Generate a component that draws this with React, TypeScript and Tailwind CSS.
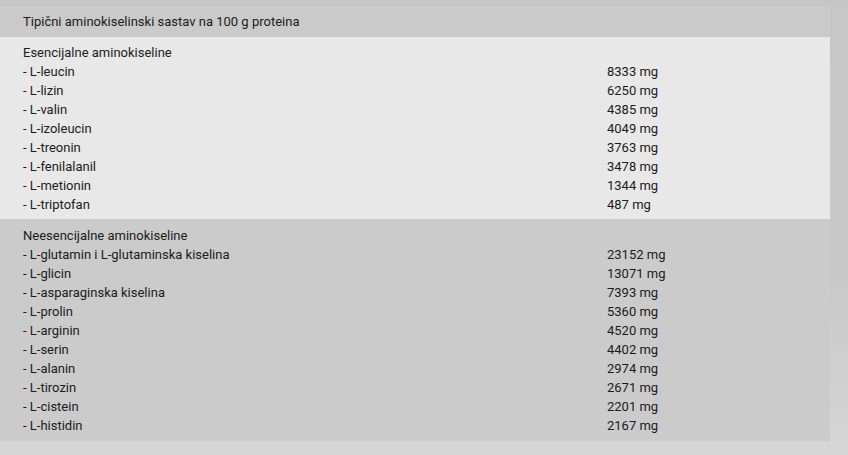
import React from "react";

const essential: [string, string][] = [
  ["- L-leucin", "8333 mg"],
  ["- L-lizin", "6250 mg"],
  ["- L-valin", "4385 mg"],
  ["- L-izoleucin", "4049 mg"],
  ["- L-treonin", "3763 mg"],
  ["- L-fenilalanil", "3478 mg"],
  ["- L-metionin", "1344 mg"],
  ["- L-triptofan", "487 mg"],
];

const nonEssential: [string, string][] = [
  ["- L-glutamin i L-glutaminska kiselina", "23152 mg"],
  ["- L-glicin", "13071 mg"],
  ["- L-asparaginska kiselina", "7393 mg"],
  ["- L-prolin", "5360 mg"],
  ["- L-arginin", "4520 mg"],
  ["- L-serin", "4402 mg"],
  ["- L-alanin", "2974 mg"],
  ["- L-tirozin", "2671 mg"],
  ["- L-cistein", "2201 mg"],
  ["- L-histidin", "2167 mg"],
];

function Row({ name, value }: { name: string; value?: string }) {
  return (
    <div className="flex h-[19px] items-center">
      <div className="w-[584px]">{name}</div>
      <div>{value ?? ""}</div>
    </div>
  );
}

export default function App() {
  return (
    <div
      className="w-[848px] h-[455px] overflow-hidden bg-[linear-gradient(180deg,#c6c6c6_0%,#c8c8c8_60%,#d6d6d6_100%)] pt-[6px] text-[13px] text-[#1c1c1c]"
      style={{ fontFamily: "Roboto, 'Liberation Sans', sans-serif" }}
    >
      <div className="w-[830px]">
        <div className="h-[31px] bg-[#cacaca] flex items-center pl-[23px]">
          Tipični aminokiselinski sastav na 100 g proteina
        </div>
        <div className="bg-[#e8e8e8] pl-[23px] pt-[6px] pb-[5px]">
          <Row name="Esencijalne aminokiseline" />
          {essential.map(([n, v]) => (
            <Row key={n} name={n} value={v} />
          ))}
        </div>
        <div className="bg-[#cbcbcb] pl-[23px] pt-[7px] pb-[6px]">
          <Row name="Neesencijalne aminokiseline" />
          {nonEssential.map(([n, v]) => (
            <Row key={n} name={n} value={v} />
          ))}
        </div>
      </div>
    </div>
  );
}
